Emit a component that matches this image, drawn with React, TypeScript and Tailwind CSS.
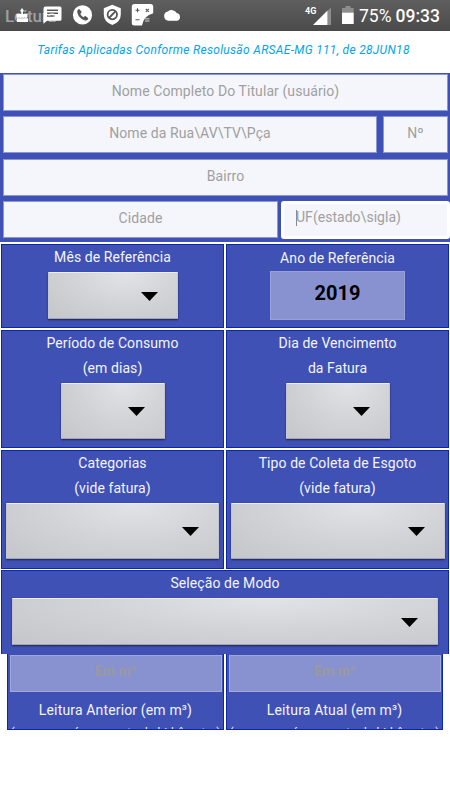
import type { ReactNode } from "react"
import clsx from "clsx"

const StatusBar = () => {
  return (
    <header className="relative h-[31px] shrink-0 border-b border-[#484848] bg-linear-to-b from-[#5f5f5f] to-[#4b4b4b]">
      <div className="pl-[5px] pt-[5px] text-[17px] leading-[22px] font-medium tracking-[-0.2px] text-[#a0a0a0]">Leitura</div>
      <svg className="absolute left-0 top-0" width="450" height="31" viewBox="0 0 450 31" fill="#fff">
        {/* cake */}
        <path d="M22 8l1.8 2.5a1.8 1.8 0 0 1-3.600 0z M21.300 12h1.700v2h4.500v3.200q-1.600 1.500-3 0-1.300 1.500-2.600 0-1.300 1.500-2.600 0-1.200 1.500-2.800 0V14h4.800z M17 18.300h11v3.700H17z" />
        {/* message */}
        <path fillRule="evenodd" d="M45.500 6.500h14.500q1.500 0 1.500 1.500v11.200q0 1.600-1.500 1.600H47l-3.500 3V8.500Q43.500 6.500 45.500 6.500zM47 9.500v1.500h11V9.500zM47 12.400v1.500h11v-1.500zM47 15.300v1.500h8v-1.500z" />
        {/* phone */}
        <circle cx="82.500" cy="14.900" r="9.600" />
        <path fill="#555" d="M79.400 9.300l2 2.300q.4.600-.1 1.200l-1 1.200q1 2.100 3 3.200l1.300-1q.6-.4 1.200 0l2.200 1.900q.5.500 0 1.100-1.200 1.700-2.900 1.300-6.700-2-7.900-8.600-.1-1.500 1.200-2.600.5-.4 1 0z" />
        {/* shield */}
        <path d="M112.300 4.800l8.500 3.500v6q0 7.700-8.500 10.700-8.500-3-8.500-10.700v-6z" />
        <circle cx="112.300" cy="14.600" r="4.700" fill="none" stroke="#555" strokeWidth="1.800" />
        <path d="M109 18l6.600-6.800" stroke="#555" strokeWidth="1.800" />
        {/* calculator */}
        <path d="M134.500 4h16q2.700 0 2.700 2.500v6.800q-9.500 2.700-11.200 12.200h-7.500q-2.700 0-2.700-2.500V6.500q0-2.500 2.700-2.500z" />
        <path d="M135.500 10.300h4M137.500 8.300v4M145.800 8.800l3 3M148.800 8.800l-3 3M135.500 19.800h4" stroke="#555" strokeWidth="1.100" />
        <path fill="#aaa" d="M145 18h4.500v1.500H145zM145 20.200h4.500v1.500H145z" />
        {/* cloud */}
        <path d="M168.500 20.700a4.700 4.700 0 0 1-.6-9.300 5.800 5.800 0 0 1 8.800 1.700 3.900 3.900 0 0 1 .5 7.600z" />
        {/* signal */}
        <path fill="#8d8d8d" d="M331 7.500V25h-3.500V11z" />
        <path d="M327.500 10.500V25H313z" />
        {/* battery */}
        <path fill="#8d8d8d" d="M345.500 6h5v2h3.200v5H342V8h3.500z" />
        <path d="M342 12.700h11.700V24H342z" />
      </svg>
      <span className="absolute left-[305px] top-[6px] text-[9px] leading-[11px] font-bold text-white">4G</span>
      <span className="absolute left-[359px] top-[5px] text-[17.5px] leading-[22px] text-white">75%</span>
      <span className="absolute left-[395.500px] top-[5px] text-[17.500px] leading-[22px] font-medium text-white">09:33</span>
    </header>
  )
}

const Field = ({ placeholder, className }: { placeholder: string; className?: string }) => {
  return (
    <input
      className={clsx(
        "h-[37px] min-w-0 rounded-none border border-[#8c95d5] bg-[#f5f6fc] px-0 pb-[4px] text-center text-[14px] tracking-[0.08px] text-[#555] outline-none placeholder:text-[#a0a0a0]",
        className
      )}
      placeholder={placeholder}
    />
  )
}

const Select = ({ className }: { className: string }) => {
  return (
    <button
      className={clsx(
        "mt-px flex shrink-0 items-center justify-end rounded-[1px] border border-[#c5c6cc] border-t-[#eeeef2] border-b-[#a4a6aa] bg-[radial-gradient(ellipse_at_60%_0%,#e2e3e7_0%,#d2d3d7_50%,#c5c6ca_100%)] pt-[2px] pr-[19px] shadow-[0_1px_2px_rgba(0,0,40,0.6)]",
        className
      )}
    >
      <svg width="17" height="9" viewBox="0 0 17 9">
        <path d="M0 0h17L8.500 9z" />
      </svg>
    </button>
  )
}

const Cell = ({ children, className }: { children: ReactNode; className?: string }) => {
  return (
    <div
      className={clsx(
        "flex flex-col items-center overflow-hidden border border-[#0a28a8] bg-[#3f51b5] text-center text-[14px] leading-[25.500px] tracking-[0.080px] text-[#f3f4fc]",
        className
      )}
    >
      {children}
    </div>
  )
}

const Reading = ({ title }: { title: string }) => {
  return (
    <Cell className="h-[76px] border-t-0">
      <input
        className="mt-px h-[37px] w-[212px] shrink-0 border border-[#a0a8dc] bg-[#8992d1] pb-[5px] text-center text-[14px] font-bold outline-none placeholder:text-[#999a9c]"
        placeholder="Em m³"
      />
      <p className="mt-[5px] shrink-0 pt-px leading-[25px] tracking-[0.15px]">{title}</p>
      <p className="-mt-[2px] shrink-0 text-[12px] tracking-normal whitespace-nowrap">(apenas o número preto do hidrômetro)</p>
    </Cell>
  )
}

const App = () => {
  return (
    <div className="flex h-[800px] w-[450px] flex-col overflow-hidden bg-white font-[Roboto,sans-serif]">
      <StatusBar />
      <h1 className="h-[42px] shrink-0 pt-[9px] pr-[3px] text-center text-[12px] leading-5 tracking-[0.310px] whitespace-nowrap text-[#03a3ea] italic">
        Tarifas Aplicadas Conforme Resolusão ARSAE-MG 111, de 28JUN18
      </h1>
      <section className="flex h-[169px] shrink-0 flex-col gap-[5px] bg-[#3f51b5] pt-px pl-[3px]">
        <Field className="w-[445px]" placeholder="Nome Completo Do Titular (usuário)" />
        <div className="flex gap-[6px]">
          <Field className="w-[374px]" placeholder="Nome da Rua\AV\TV\Pça" />
          <Field className="w-[65px]" placeholder="Nº" />
        </div>
        <Field className="mt-[1px] w-[445px]" placeholder="Bairro" />
        <div className="flex gap-[3px]">
          <Field className="w-[275px]" placeholder="Cidade" />
          <div className="flex h-[38px] w-[169px] rounded-[3px] border-[3px] border-white bg-[#f5f6fc] pl-[12px]">
            <span className="mt-[6px] -mr-px h-[16px] w-px bg-[#888]" />
            <input
              className="min-w-0 flex-1 bg-transparent pb-[5px] text-[14px] tracking-[0.030px] outline-none placeholder:text-[#a0a0a0]"
              placeholder="UF(estado\sigla)"
            />
          </div>
        </div>
      </section>
      <main className="mt-[2px] flex flex-col gap-px pr-px pl-px">
        <div className="grid grid-cols-2 gap-x-[2px]">
          <Cell className="h-[84px]">
            <p>Mês de Referência</p>
            <Select className="h-[47px] w-[130px]" />
          </Cell>
          <Cell className="h-[84px] pt-px">
            <p>Ano de Referência</p>
            <div className="-mt-px h-[49px] w-[135px] border border-[#98a0d8] bg-[#8992d1] pt-[9px] text-[20px] font-bold text-black">
              2019
            </div>
          </Cell>
        </div>
        <div className="mt-px grid grid-cols-2 gap-x-[2px]">
          <Cell className="h-[118px]">
            <p className="leading-[25px]">Período de Consumo</p>
            <p>(em dias)</p>
            <Select className="h-[56px] w-[104px]" />
          </Cell>
          <Cell className="h-[118px]">
            <p className="leading-[25px]">Dia de Vencimento</p>
            <p>da Fatura</p>
            <Select className="h-[56px] w-[104px]" />
          </Cell>
        </div>
        <div className="mt-px grid grid-cols-2 gap-x-[2px]">
          <Cell className="h-[119px]">
            <p className="leading-[25px]">Categorias</p>
            <p>(vide fatura)</p>
            <Select className="h-[56px] w-[213px]" />
          </Cell>
          <Cell className="h-[119px]">
            <p className="leading-[25px]">Tipo de Coleta de Esgoto</p>
            <p>(vide fatura)</p>
            <Select className="h-[56px] w-[214px]" />
          </Cell>
        </div>
        <Cell className="h-[84px] border-b-0">
          <p>Seleção de Modo</p>
          <Select className="h-[47px] w-[426px]" />
        </Cell>
      </main>
      <section className="mx-[7px] grid grid-cols-2 gap-x-[2px]">
        <Reading title="Leitura Anterior (em m³)" />
        <Reading title="Leitura Atual (em m³)" />
      </section>
    </div>
  )
}
export default App
